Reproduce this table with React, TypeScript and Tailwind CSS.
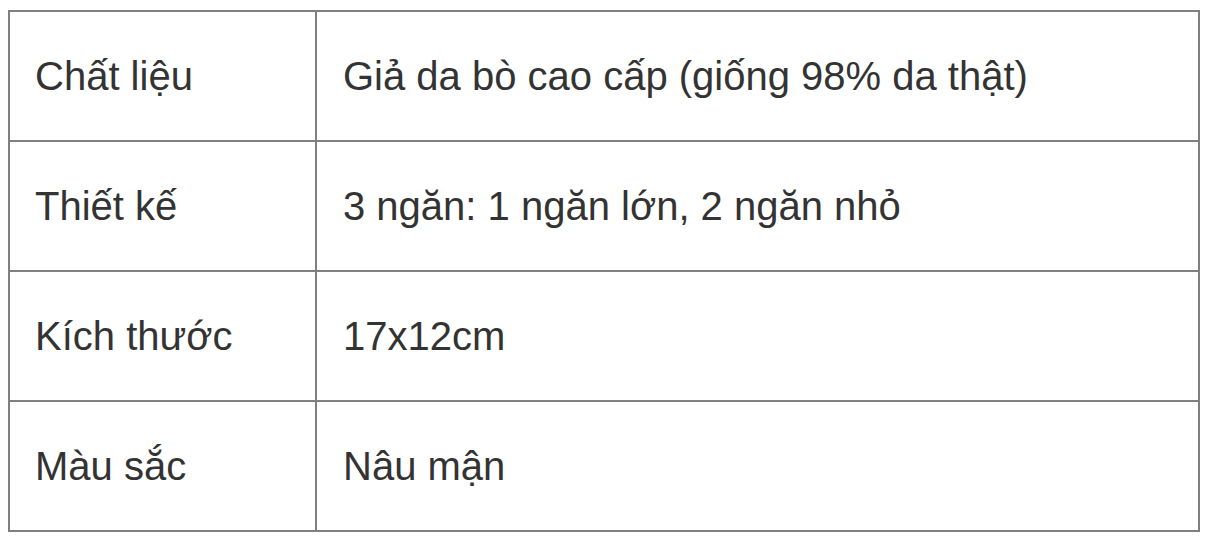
import React from 'react'

const rows = [
    ['Chất liệu', 'Giả da bò cao cấp (giống 98% da thật)'],
    ['Thiết kế', '3 ngăn: 1 ngăn lớn, 2 ngăn nhỏ'],
    ['Kích thước', '17x12cm'],
    ['Màu sắc', 'Nâu mận'],
]

const App = () => {
    return (
        <div className="min-h-screen bg-white pt-[10px] pl-[8px]" style={{ fontFamily: '"Liberation Sans", Arial, sans-serif' }}>
            <table className="w-[1192px] border-collapse text-[40px] leading-[46px] text-[#333333]">
                <tbody>
                    {rows.map(([label, value]) => (
                        <tr key={label} className="h-[130px]">
                            <td className="w-[307px] border-2 border-[#808080] px-[25px] align-middle">{label}</td>
                            <td className="border-2 border-[#808080] px-[26px] align-middle">{value}</td>
                        </tr>
                    ))}
                </tbody>
            </table>
        </div>
    )
}

export default App
